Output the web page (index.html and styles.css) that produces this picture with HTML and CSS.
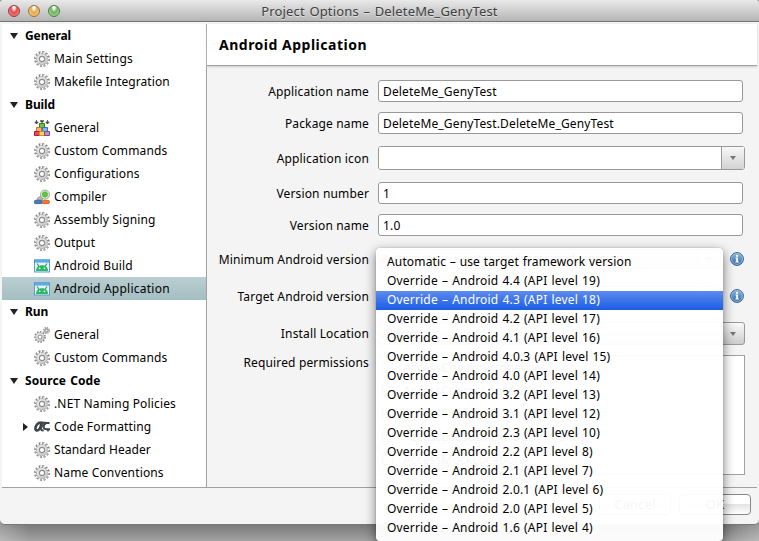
FILE: index.html
```html
<!DOCTYPE html>
<html lang="en">
<head>
<meta charset="utf-8">
<title>Project Options – DeleteMe_GenyTest</title>
<link rel="stylesheet" href="styles.css">
</head>
<body>
<svg class="defs" width="0" height="0">
  <defs>
    <linearGradient id="metal" x1="0" y1="0" x2="1" y2="1"><stop offset="0" stop-color="#f4f4f4"/><stop offset="1" stop-color="#c6c6c6"/></linearGradient>
    <linearGradient id="blue" x1="0" y1="0" x2="0" y2="1"><stop offset="0" stop-color="#8db7dc"/><stop offset="1" stop-color="#2f68a3"/></linearGradient>
    <symbol id="gear" viewBox="0 0 16 16">
      <circle cx="8" cy="8" r="6.600" fill="none" stroke="#808080" stroke-width="2.600" stroke-dasharray="1.900 1.556"/>
      <circle cx="8" cy="8" r="5.500" fill="url(#metal)" stroke="#a0a0a0" stroke-width=".8"/>
      <circle cx="8" cy="8" r="6" fill="none" stroke="#dedede" stroke-width="2" stroke-dasharray=".9 2.242" stroke-dashoffset="-.4"/>
      <circle cx="8" cy="8" r="2.600" fill="#fff" stroke="#8c8c8c" stroke-width="1.100"/>
    </symbol>
    <symbol id="gears" viewBox="0 0 16 16">
      <circle cx="6" cy="10" r="4.900" fill="none" stroke="#8a8a8a" stroke-width="2" stroke-dasharray="1.500 1.299"/>
      <circle cx="6" cy="10" r="4.200" fill="url(#metal)" stroke="#aaa" stroke-width=".6"/>
      <circle cx="6" cy="10" r="2" fill="#fff" stroke="#8f8f8f"/>
      <circle cx="12.500" cy="3.500" r="2.800" fill="#ccc" stroke="#8f8f8f" stroke-width="1.400" stroke-dasharray="1.200 .999"/>
      <circle cx="12.500" cy="3.500" r="1.300" fill="#eee" stroke="#888" stroke-width=".8"/>
    </symbol>
    <symbol id="blocks" viewBox="0 0 16 16">
      <path d="M2.500 0v3M13.500 0v3M6 .8h4M.8 2h3.400L2.500 4zM11.800 2h3.400l-1.700 2zM6.500 1h3L8 2.700z" fill="#444" stroke="#444" stroke-width=".8"/>
      <path d="M5.500 3.500h5v4h-5z" fill="#5ccd3d" stroke="#22881a"/>
      <path d="M2.500 7.500h5v4h-5z" fill="#f9b47d" stroke="#d36a2b"/>
      <path d="M8.500 7.500h5v4h-5z" fill="#83b5ea" stroke="#3972ba"/>
      <path d="M.5 11.500h5v4h-5z" fill="#ed4a59" stroke="#bd1530"/>
      <path d="M5.500 11.500h5v4h-5z" fill="#f3d55d" stroke="#c69322"/>
      <path d="M10.500 11.500h5v4h-5z" fill="#bd90c9" stroke="#78498c"/>
    </symbol>
    <symbol id="compiler" viewBox="0 0 16 16">
      <path d="M3 9.500l3-2 2.500 1v2.200H3z" fill="#b8bcb6" stroke="#868b84" stroke-width=".7"/>
      <circle cx="11" cy="5.600" r="4.500" fill="#e2f0dc" stroke="#8f9f8a" stroke-width=".9"/>
      <circle cx="11" cy="5.500" r="2.700" fill="#5cc93f" stroke="#49a835" stroke-width=".6"/>
      <rect x=".4" y="11.400" width="7.600" height="3.200" rx="1" fill="#3f7dc0" stroke="#255891" stroke-width=".8"/>
      <rect x="8.200" y="11.400" width="7.200" height="3.200" rx="1" fill="#f27835" stroke="#cc4d12" stroke-width=".8"/>
    </symbol>
    <symbol id="android" viewBox="0 0 16 16">
      <rect x=".5" y="2" width="15" height="12" fill="#e9f4f5" stroke="#5a9bd2"/>
      <path d="M0 1.500h16v3H0z" fill="#4795dc"/>
      <path d="M1 2.500h14v1H1z" fill="#7dbdf0"/>
      <path d="M2 13c0-3.400 2-5.700 6-5.700s6 2.300 6 5.700z" fill="#2bb765"/>
      <path d="M4.800 8.200L3 5.500M11.200 8.200L13 5.500" stroke="#2aa65a" stroke-width="1.200"/>
      <circle cx="5.600" cy="10.300" r=".9" fill="#eafff0"/><circle cx="10.400" cy="10.300" r=".9" fill="#eafff0"/>
    </symbol>
    <symbol id="format" viewBox="0 0 16 16">
      <path d="M8.500 3.800Q3.200 3 1.600 8q-.7 3.500 1.600 3.500Q5.800 11.300 7.400 5" fill="none" stroke="#3e4447" stroke-width="2.600"/>
      <path d="M4 3.800h8M8.500 4L7 9.500q0 2.400 2.700 1.800" fill="none" stroke="#3e4447" stroke-width="2"/>
      <path d="M15.500 4h-3Q9.800 4.700 9.600 8q.2 2.200 2.700 2.200H16" fill="none" stroke="#3e4447" stroke-width="2"/>
      <path d="M12.500 10.500h3L14 13z" fill="#3e4447"/>
    </symbol>
    <symbol id="info" viewBox="0 0 14 14">
      <circle cx="7" cy="7" r="6.400" fill="url(#blue)" stroke="#2f6095"/>
      <circle cx="7" cy="7" r="5.400" fill="none" stroke="#a5c7e3" stroke-width=".8"/>
      <path d="M6 3h2v1.700H6zM5.500 5.600H8v4h.8v1H5.400v-1h.8v-3h-.7z" fill="#fff"/>
    </symbol>
  </defs>
</svg>
<div class="window">
  <header class="titlebar">
    <div class="lights"><i class="red"></i><i class="amber"></i><i class="green"></i></div>
    <h1>Project Options – DeleteMe_GenyTest</h1>
  </header>
  <div class="content">
    <nav class="sidebar">
      <div class="group"><i></i><span>General</span></div>
      <div class="row"><svg><use href="#gear"/></svg><span>Main Settings</span></div>
      <div class="row tight"><svg><use href="#gear"/></svg><span>Makefile Integration</span></div>
      <div class="group"><i></i><span>Build</span></div>
      <div class="row"><svg><use href="#blocks"/></svg><span>General</span></div>
      <div class="row"><svg><use href="#gear"/></svg><span>Custom Commands</span></div>
      <div class="row"><svg><use href="#gear"/></svg><span>Configurations</span></div>
      <div class="row"><svg><use href="#compiler"/></svg><span>Compiler</span></div>
      <div class="row"><svg><use href="#gear"/></svg><span>Assembly Signing</span></div>
      <div class="row"><svg><use href="#gear"/></svg><span>Output</span></div>
      <div class="row"><svg><use href="#android"/></svg><span>Android Build</span></div>
      <div class="row selected"><svg><use href="#android"/></svg><span>Android Application</span></div>
      <div class="group"><i></i><span>Run</span></div>
      <div class="row"><svg><use href="#gears"/></svg><span>General</span></div>
      <div class="row"><svg><use href="#gear"/></svg><span>Custom Commands</span></div>
      <div class="group wide"><i></i><span>Source Code</span></div>
      <div class="row"><svg><use href="#gear"/></svg><span>.NET Naming Policies</span></div>
      <div class="row closed"><i></i><svg><use href="#format"/></svg><span>Code Formatting</span></div>
      <div class="row tight"><svg><use href="#gear"/></svg><span>Standard Header</span></div>
      <div class="row"><svg><use href="#gear"/></svg><span>Name Conventions</span></div>
    </nav>
    <main>
      <h2>Android Application</h2>
      <div class="form">
        <div class="field"><label>Application name</label><div class="input">DeleteMe_GenyTest</div></div>
        <div class="field"><label>Package name</label><div class="input">DeleteMe_GenyTest.DeleteMe_GenyTest</div></div>
        <div class="field icon"><label>Application icon</label><div class="combo white"><span></span><b></b></div></div>
        <div class="field"><label>Version number</label><div class="input">1</div></div>
        <div class="field"><label>Version name</label><div class="input">1.0</div></div>
        <div class="field target"><label>Minimum Android version</label><div class="combo"><span>Automatic – use target framework version</span><b></b></div><svg><use href="#info"/></svg></div>
        <div class="field target"><label>Target Android version</label><div class="combo"><span></span><b></b></div><svg><use href="#info"/></svg></div>
        <div class="field install"><label>Install Location</label><div class="combo"><span>Automatic</span><b></b></div></div>
        <div class="field perms"><label>Required permissions</label>
          <div class="list">
            <div><i></i>AccessCheckinProperties</div>
            <div><i></i>AccessCoarseLocation</div>
            <div><i></i>AccessFineLocation</div>
            <div><i></i>AccessLocationExtraCommands</div>
            <div><i></i>AccessMockLocation</div>
          </div>
        </div>
      </div>
    </main>
  </div>
  <footer><div class="button">Cancel</div><div class="button">OK</div></footer>
</div>
<div class="menu">
  <div class="auto">Automatic – use target framework version</div>
  <div>Override – Android 4.4 (API level 19)</div>
  <div class="active">Override – Android 4.3 (API level 18)</div>
  <div>Override – Android 4.2 (API level 17)</div>
  <div>Override – Android 4.1 (API level 16)</div>
  <div>Override – Android 4.0.3 (API level 15)</div>
  <div>Override – Android 4.0 (API level 14)</div>
  <div>Override – Android 3.2 (API level 13)</div>
  <div>Override – Android 3.1 (API level 12)</div>
  <div>Override – Android 2.3 (API level 10)</div>
  <div>Override – Android 2.2 (API level 8)</div>
  <div>Override – Android 2.1 (API level 7)</div>
  <div>Override – Android 2.0.1 (API level 6)</div>
  <div>Override – Android 2.0 (API level 5)</div>
  <div>Override – Android 1.6 (API level 4)</div>
</div>
</body>
</html>
```
FILE: styles.css
```css
* { box-sizing: border-box; }
body {
  margin: 0;
  width: 759px;
  height: 541px;
  overflow: hidden;
  position: relative;
  background: linear-gradient(90deg, #ffffff40, #fff0 30px 729px, #ffffff40), linear-gradient(#777 524px, #a2a2a2 541px);
  font: 12px/16px "Noto Sans", "Open Sans", sans-serif;
  letter-spacing: .15px;
  color: #000;
  white-space: nowrap;
}
.defs { display: block; height: 0; }
.window {
  height: 525px;
  background: #f4f4f4;
  border-radius: 4px 4px 5px 5px;
  border-bottom: 1px solid #777;
  overflow: hidden;
  display: flex;
  flex-direction: column;
}
.titlebar {
  flex: none;
  height: 22px;
  padding-top: 1px;
  display: grid;
  grid-template-columns: 1fr auto 1fr;
  align-items: center;
  background: linear-gradient(#e9e9e9, #b5b5b5);
  border-bottom: 1px solid #747474;
}
.lights { display: flex; gap: 8px; padding-left: 8px; }
.lights i { width: 12px; height: 12px; border-radius: 50%; border: 1px solid #777; }
.lights .red { background: radial-gradient(ellipse at 50% 15%, #fff 0 10%, #e44b50 42%, #ec696d 65%, #ffb2ae); border-color: #963b3f; }
.lights .amber { background: radial-gradient(ellipse at 50% 15%, #fff 0 10%, #e8a74b 42%, #f2bc68 65%, #ffe9a5); border-color: #99703b; }
.lights .green { background: radial-gradient(ellipse at 50% 15%, #fff 0 10%, #6eb45c 42%, #8bc979 65%, #d1f5b0); border-color: #4c7b42; }
h1 { margin: 0; font-size: 13px; line-height: 18px; font-weight: 400; color: #404040; text-shadow: 0 1px #ffffff80; letter-spacing: .15px; word-spacing: 1.1px; }
.content {
  flex: none;
  height: 464px;
  margin: 2px 2px 0;
  display: flex;
  border-bottom: 1px solid #a0a0a0;
}
.sidebar { width: 205px; background: #fff; border-right: 1px solid #a0a0a0; }
.group, .row { height: 23px; display: flex; align-items: center; }
.group span, .row span { padding-top: 1px; }
.group { padding-left: 8px; font-weight: 700; gap: 7px; letter-spacing: -.1px; }
.group.wide { letter-spacing: .1px; word-spacing: 1px; }
.group i { border: 4px solid transparent; border-top: 6px solid #222; border-bottom: 0; }
.row { padding-left: 32px; gap: 4px; }
.row.tight { letter-spacing: .06px; }
.row svg { width: 16px; height: 16px; }
.row.selected { background: linear-gradient(#bbced1, #a3bec2); letter-spacing: .24px; }
.row.closed { padding-left: 21px; }
.row.closed i { border: 4px solid transparent; border-left: 5px solid #222; border-right: 0; }
.row.closed svg { margin-left: 2px; }
main { flex: 1; display: flex; flex-direction: column; }
h2 {
  margin: 0;
  height: 42px;
  padding: 12px 12px 0;
  background: #fff;
  border-bottom: 1px solid #a0a0a0;
  box-shadow: 0 1px 2px #ccc;
  font-size: 14px;
  line-height: 18px;
  letter-spacing: .5px;
}
.form { padding: 14px 0 0; display: flex; flex-direction: column; }
.field { display: flex; height: 22px; margin-bottom: 10px; align-items: center; }
.field label { width: 162px; margin-right: 9px; padding-top: 2px; text-align: right; }
.field > svg { width: 14px; height: 14px; margin-left: 9px; }
.input { width: 365px; height: 22px; padding: 3px 4px 0; background: #fff; border: 1px solid #999; border-radius: 3px; }
.combo { width: 367px; height: 24px; display: flex; border: 1px solid #999; border-radius: 3px; background: linear-gradient(#fafafa, #ccc); }
.combo span { flex: 1; padding: 3px; }
.combo b { width: 23px; border-left: 1px solid #999; display: grid; place-items: center; }
.combo b::before { content: ""; border: 3px solid transparent; border-top: 4px solid #777; border-bottom: 0; }
.combo.white span { background: #fff; border-radius: 2px 0 0 2px; }
.combo.white b { background: linear-gradient(#f8f8f8, #d2d2d2); }
.field.icon { height: 24px; margin: 2px 0 12px; }
.field.target { height: 24px; margin: 1px 0 12px; }
.field.target .combo { width: 343px; height: 20px; }
.field.target .combo span { padding: 1px 3px; }
.field.target + .target { margin: 1px 0 13px; }
.field.install { height: 23px; margin: 1px 0 10px; }
.field.install .combo { height: 23px; }
.field.install label { padding-top: 0; }
.field.perms { height: 120px; align-items: flex-start; margin: 0; }
.field.perms label { padding-top: 0; }
.list { width: 367px; height: 120px; background: #fff; border: 1px solid #a0a0a0; }
.list div { height: 23px; display: flex; align-items: center; gap: 10px; padding-left: 3px; }
.list i { width: 11px; height: 11px; border: 1px solid #777; }
footer { flex: 1; padding: 6px 8px; display: flex; justify-content: flex-end; gap: 8px; }
.button { width: 72px; height: 21px; border: 1px solid #888; border-radius: 4px; background: linear-gradient(#fff 45%, #e5e5e5 50%, #fff); text-align: center; line-height: 19px; font-size: 13px; }
.menu {
  position: absolute;
  left: 376px;
  top: 248px;
  width: 347px;
  height: 293px;
  padding-top: 5px;
  border-radius: 4px;
  background: #fffffff5;
  box-shadow: 0 4px 12px #0008, 0 0 1px #0007;
}
.menu div { height: 19px; padding: 0 11px; line-height: 17px; letter-spacing: .18px; word-spacing: .8px; }
.menu .auto { letter-spacing: .15px; word-spacing: .4px; }
.menu .active { color: #fff; background: linear-gradient(#5d8bee, #1c5de6); }
```
